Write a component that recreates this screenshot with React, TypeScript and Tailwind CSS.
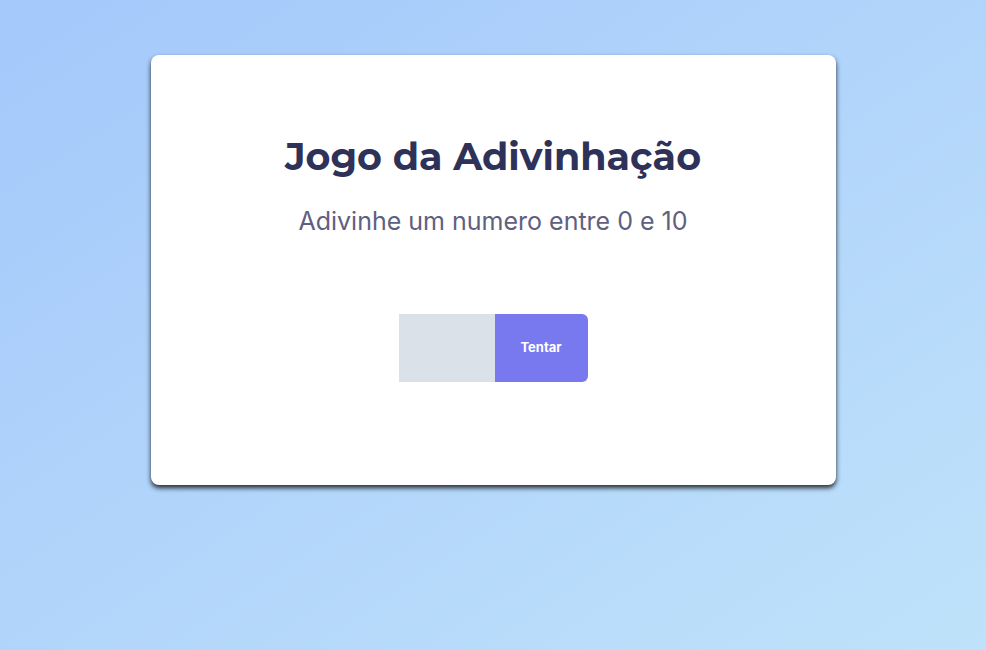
export default function App() {
  return (
    <div className="min-h-screen w-full bg-gradient-to-br from-[#a4c8fa] to-[#bfe2fa] flex justify-center pt-[55px]">
      <div className="w-[685px] h-[430px] bg-white rounded-lg shadow-[0_3px_5px_rgba(0,0,0,0.8)] flex flex-col items-center">
        <h1 className="mt-[76px] text-[38px] leading-[52px] font-bold text-[#2e3158] font-['Montserrat','Open_Sans',sans-serif]">
          Jogo da Adivinhação
        </h1>
        <p className="mt-[22px] text-[25px] leading-[32px] text-[#5f607f] font-['Inter',sans-serif]">
          Adivinhe um numero entre 0 e 10
        </p>
        <div className="mt-[77px] flex">
          <input className="w-[96px] h-[68px] bg-[#dbe1e9] outline-none px-3 text-[#2e3158]" />
          <button className="w-[93px] h-[68px] bg-[#7979ef] rounded-r-md text-white text-[13px] font-bold font-['Inter',sans-serif]">
            Tentar
          </button>
        </div>
      </div>
    </div>
  );
}
